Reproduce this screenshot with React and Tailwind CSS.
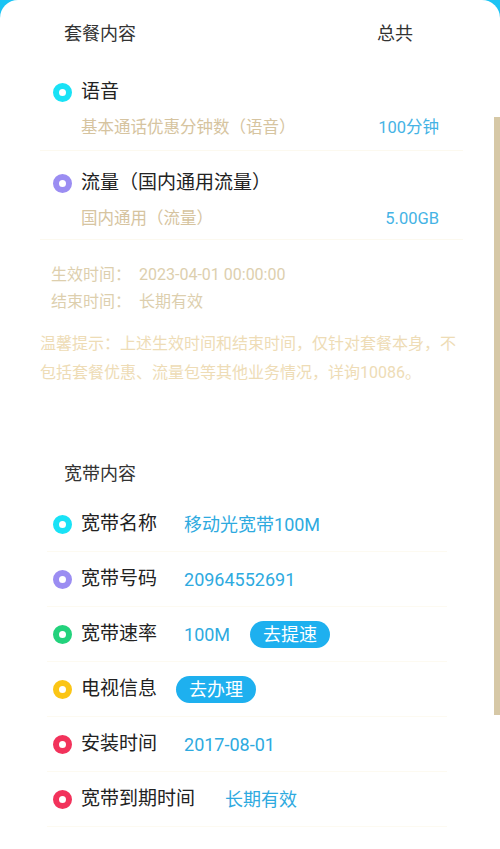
import React from 'react';

const cjk = { fontFamily: 'Roboto, "Noto Sans CJK SC", "Noto Sans", sans-serif' };

const plans = [
  { id: 1, title: '语音', dot: 'border-[#19e2f6]', desc: '基本通话优惠分钟数（语音）', value: '100分钟' },
  { id: 2, title: '流量（国内通用流量）', dot: 'border-[#9b8df2]', desc: '国内通用（流量）', value: '5.00GB' },
];

const broadband = [
  { id: 1, label: '宽带名称', dot: 'border-[#19e2f6]', value: '移动光宽带100M', gap: 'gap-[27px]' },
  { id: 2, label: '宽带号码', dot: 'border-[#9b8df2]', value: '20964552691', gap: 'gap-[27px]' },
  { id: 3, label: '宽带速率', dot: 'border-[#22d27c]', value: '100M', button: '去提速', gap: 'gap-[27px]' },
  { id: 4, label: '电视信息', dot: 'border-[#fbc515]', button: '去办理', gap: 'gap-[19px]' },
  { id: 5, label: '安装时间', dot: 'border-[#f2325b]', value: '2017-08-01', gap: 'gap-[27px]' },
  { id: 6, label: '宽带到期时间', dot: 'border-[#f2325b]', value: '长期有效', gap: 'gap-[30px]' },
];

const Dot = ({ color }) => (
  <span className={`w-[19px] h-[19px] rounded-full bg-white border-[6px] shrink-0 ${color}`} />
);

const App = () => {
  return (
    <div
      className="relative w-[500px] h-[849px] overflow-hidden bg-[#1bc4f4]"
      style={cjk}
    >
      <div className="bg-white h-full rounded-t-[18px] pt-[10px]">
        {/* 套餐内容 */}
        <div className="flex items-center justify-between h-[46px] pl-[64px] pr-[87px] text-[18px] text-[#333]">
          <span>套餐内容</span>
          <span>总共</span>
        </div>
        <div className="mt-[18px] pl-[40px] pr-[37px]">
          {plans.map(p => (
            <div key={p.id} className="border-b border-[#fcf9ef] pb-[4px] mb-[14px] last:mb-0 last:pb-[2px]">
              <div className="flex items-center gap-[9px] h-[36px] pl-[13px] text-[19px] text-[#222]">
                <Dot color={p.dot} />
                <span>{p.title}</span>
              </div>
              <div className="flex items-center justify-between h-[36px] pl-[41px] pr-[24px] text-[16.5px]">
                <span className="text-[#d6c4a0]">{p.desc}</span>
                <span className="text-[#45b3e5]">{p.value}</span>
              </div>
            </div>
          ))}
        </div>
        <div className="mt-[21px] pl-[51px] text-[16px] leading-[27px] text-[#ddcfae]">
          <div className="flex gap-[8px]"><span>生效时间：</span><span>2023-04-01 00:00:00</span></div>
          <div className="flex gap-[8px]"><span>结束时间：</span><span>长期有效</span></div>
        </div>
        <p className="mt-[14px] pl-[40px] pr-[40px] text-[16px] leading-[29px] text-[#eedcb6]">
          温馨提示：上述生效时间和结束时间，仅针对套餐本身，不包括套餐优惠、流量包等其他业务情况，详询10086。
        </p>

        {/* 宽带内容 */}
        <div className="mt-[63px] flex items-center h-[46px] pl-[64px] text-[18px] text-[#333]">
          宽带内容
        </div>
        <div className="mt-[1px] pl-[47px] pr-[53px]">
          {broadband.map(b => (
            <div key={b.id} className={`flex items-center h-[55px] pl-[6px] border-b border-[#fdfaf1] ${b.gap}`}>
              <div className="flex items-center gap-[9px] text-[19px] text-[#222]">
                <Dot color={b.dot} />
                <span>{b.label}</span>
              </div>
              {b.value && <span className="text-[18px] text-[#2eaadf]">{b.value}</span>}
              {b.button && (
                <span className={`h-[27px] px-[13px] rounded-full bg-[#1eb0ef] text-white text-[18px] flex items-center ${b.value ? '-ml-[7px]' : ''}`}>
                  {b.button}
                </span>
              )}
            </div>
          ))}
        </div>
      </div>
      {/* scroll indicator */}
      <div className="absolute right-0 top-[117px] w-[6px] h-[598px] bg-[#d6c8a6]" />
    </div>
  );
};

export default App;
